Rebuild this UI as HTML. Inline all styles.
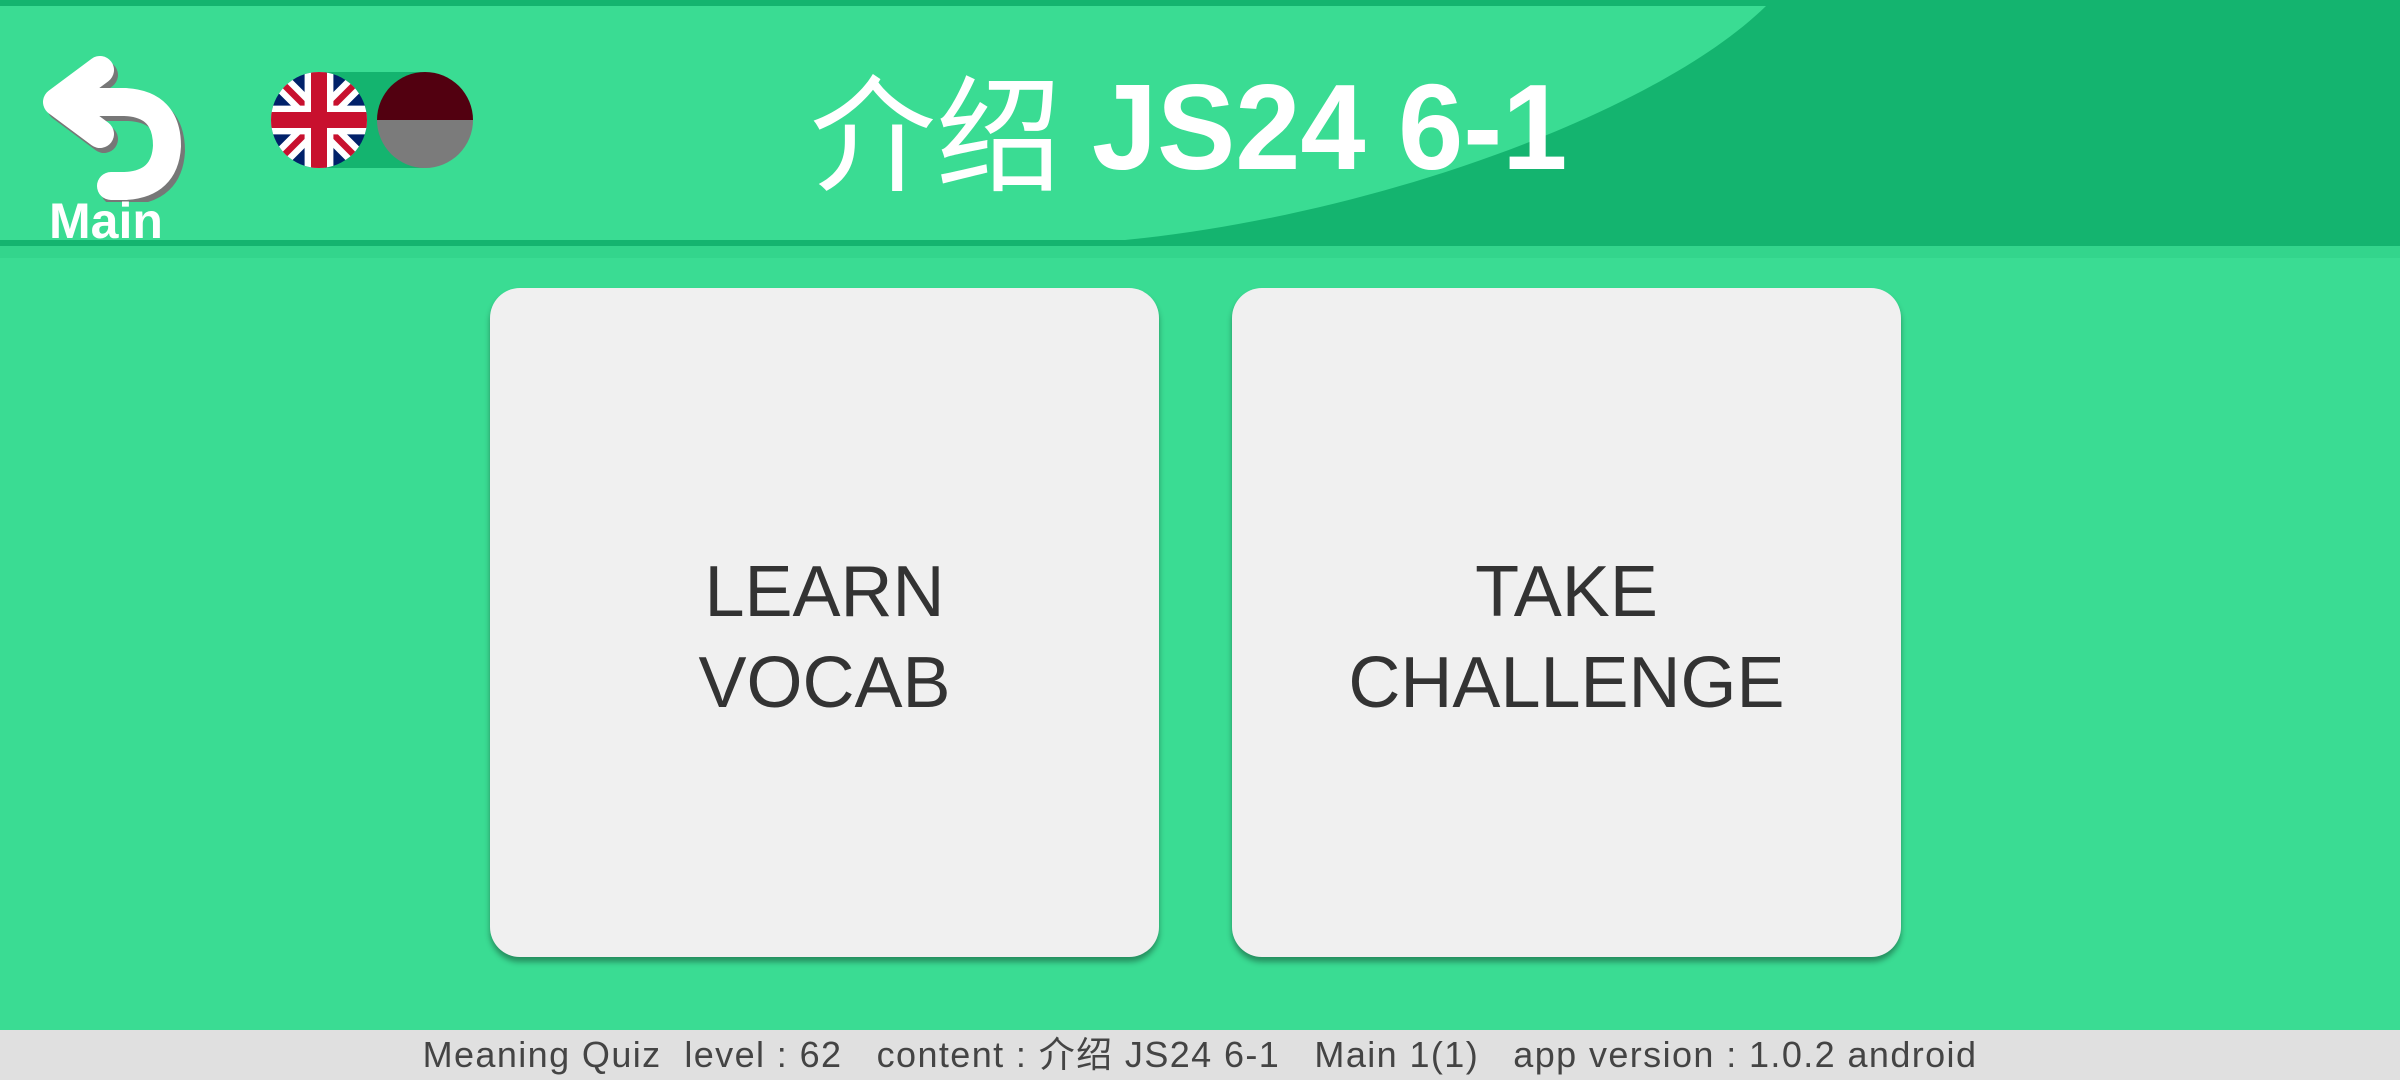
<!DOCTYPE html>
<html><head><meta charset="utf-8"><style>
*{margin:0;padding:0;box-sizing:border-box}
body{width:2400px;height:1080px;background:#3ADC93;position:relative;overflow:hidden;font-family:"Liberation Sans","Noto Sans CJK SC",sans-serif}
.abs{position:absolute}
.card{position:absolute;top:288px;width:669px;height:669px;background:#F0F0F0;border-radius:30px;box-shadow:0 5px 6px rgba(0,0,0,0.35);display:flex;align-items:center;justify-content:center;text-align:center;color:#333;font-size:72px;line-height:91px;padding-top:30px}
</style></head><body>
<svg class="abs" style="left:0;top:0" width="2400" height="262">
<rect x="0" y="0" width="2400" height="246" fill="#14B46F"/>
<rect x="0" y="246" width="2400" height="12" fill="#33D58C"/>
<path d="M0 6 L1766 6 C1660 110 1380 215 1125 240 L0 240 Z" fill="#3ADC93"/>
<rect x="0" y="0" width="2400" height="6" fill="#14B46F"/>
</svg>
<svg class="abs" style="left:30px;top:52px" width="170" height="150" viewBox="0 0 170 150">
<g transform="translate(19,5)" fill="none" stroke="#777" stroke-linecap="round" stroke-linejoin="round">
<path d="M55 18 L12 50 L55 82" stroke-width="28"/>
<path d="M22 50 L80 50 Q122 52 122 94 Q120 132 80 134 L66 134" stroke-width="28"/>
</g>
<g transform="translate(15,0)" fill="none" stroke="#fff" stroke-linecap="round" stroke-linejoin="round">
<path d="M55 18 L12 50 L55 82" stroke-width="28"/>
<path d="M22 50 L80 50 Q122 52 122 94 Q120 132 80 134 L66 134" stroke-width="28"/>
</g>
</svg>
<div class="abs" style="left:49px;top:192px;color:#fff;font-weight:bold;font-size:50px">Main</div>
<div class="abs" style="left:319px;top:72px;width:106px;height:96px;background:#14B46F"></div>
<svg class="abs" style="left:271px;top:72px" width="96" height="96" viewBox="0 0 60 60">
<defs><clipPath id="c"><circle cx="30" cy="30" r="30"/></clipPath></defs>
<g clip-path="url(#c)">
<rect width="60" height="60" fill="#012169"/>
<path d="M0 0L60 60M60 0L0 60" stroke="#fff" stroke-width="12"/>
<path d="M0 0L60 60M60 0L0 60" stroke="#C8102E" stroke-width="4"/>
<path d="M30 0V60M0 30H60" stroke="#fff" stroke-width="18"/>
<path d="M30 0V60M0 30H60" stroke="#C8102E" stroke-width="10"/>
</g></svg>
<svg class="abs" style="left:377px;top:72px" width="96" height="96">
<defs><clipPath id="d"><circle cx="48" cy="48" r="48"/></clipPath></defs>
<g clip-path="url(#d)"><rect width="96" height="48" fill="#520010"/><rect y="48" width="96" height="48" fill="#7B7B7B"/></g>
</svg>
<div class="abs" style="left:810px;top:52px;color:#fff;white-space:nowrap;height:150px;display:flex;align-items:center">
<span style="font-size:126px;font-family:'Noto Sans CJK SC',sans-serif">介绍</span>
<span style="display:inline-block;font-size:122px;font-weight:bold;transform:scaleX(0.96);transform-origin:left center;margin-left:30px">JS24 6-1</span>
</div>
<div class="card" style="left:490px">LEARN<br>VOCAB</div>
<div class="card" style="left:1232px">TAKE<br>CHALLENGE</div>
<div class="abs" style="left:0;top:1030px;width:2400px;height:50px;background:#E0E0E0;color:#444;font-size:36px;letter-spacing:1.4px;text-align:center;line-height:50px;white-space:pre">Meaning Quiz  level : 62   content : 介绍 JS24 6-1   Main 1(1)   app version : 1.0.2 android</div>
</body></html>
